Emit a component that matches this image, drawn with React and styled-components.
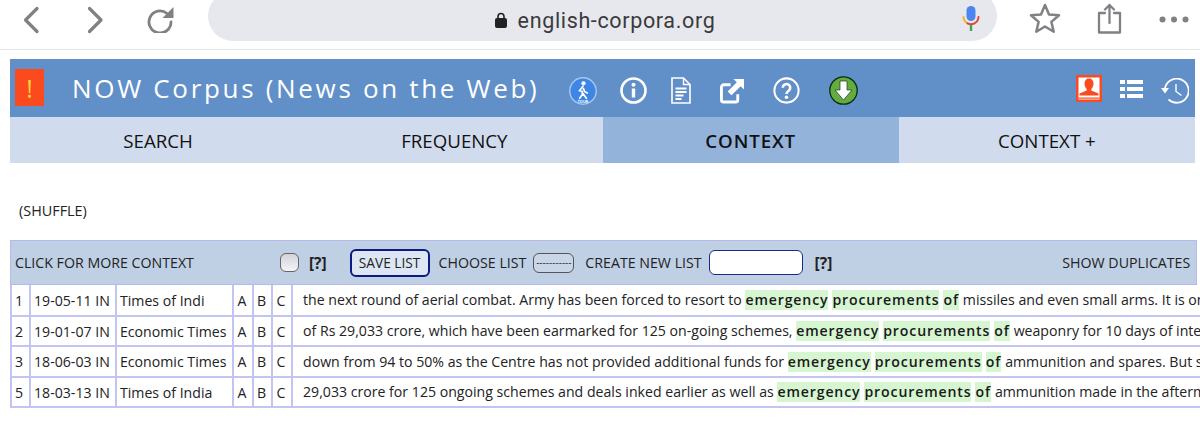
import React from "react";
import styled, { createGlobalStyle } from "styled-components";

const GlobalStyle = createGlobalStyle`
    html, body {
        margin: 0;
        height: 446px;
        overflow: hidden;
        background: #fff;
        font-family: "Open Sans", "Noto Sans", sans-serif;
        color: #1c1c1c;
    }
`

const BrowserBar = styled.div`
    height: 49px;
    border-bottom: 1px solid #e6e6e6;
    display: flex;
    align-items: center;
    overflow: hidden;
`
const NavIcons = styled.div`
    width: 208px;
    padding-left: 23px;
    box-sizing: border-box;
    display: flex;
    align-items: center;
    gap: 40px;
    margin-top: -10px;
    flex: none;
`
const UrlPill = styled.div`
    width: 789px;
    height: 50px;
    margin-top: -17px;
    flex: none;
    border-radius: 25px;
    background: #e7e8ed;
    display: flex;
    align-items: center;
    justify-content: center;
    padding: 8px 0 0 5px;
    box-sizing: border-box;
    position: relative;
    font-family: "Roboto", sans-serif;
    font-size: 21.5px;
    letter-spacing: 0.65px;
    color: #3a3a3c;
    gap: 11px;
`
const MicSlot = styled.span`
    position: absolute;
    right: 17px;
    top: 15px;
    line-height: 0;
`
const BrowserActions = styled.div`
    flex: 1;
    display: flex;
    align-items: center;
    margin-top: -13px;
    padding-left: 32px;
    gap: 36px;
`
const DotsSlot = styled.span`
    margin: 3px 0 0 1px;
    line-height: 0;
`

const Page = styled.div`
    padding: 9px 0 0 10px;
`
const Header = styled.div`
    width: 1185px;
    height: 58px;
    background: #618fc8;
    display: flex;
    align-items: center;
    box-sizing: border-box;
    padding-left: 5px;
`
const AlertBox = styled.div`
    width: 29px;
    height: 37px;
    margin-top: -1px;
    background: #fc4a1f;
    color: #f8d43c;
    font-size: 25px;
    display: flex;
    align-items: center;
    justify-content: center;
    flex: none;
`
const Title = styled.div`
    margin-left: 28px;
    width: 498px;
    flex: none;
    font-size: 26px;
    letter-spacing: 2.68px;
    color: #fff;
    white-space: nowrap;
`
const IconSlot = styled.span`
    margin-left: ${props => props.left}px;
    margin-top: ${props => props.top ?? 5}px;
    line-height: 0;
    flex: none;
`
const Tabs = styled.div`
    width: 1185px;
    display: grid;
    grid-template-columns: repeat(4, 1fr);
`
const Tab = styled.div`
    height: 46px;
    padding-top: 1px;
    box-sizing: border-box;
    display: flex;
    align-items: center;
    justify-content: center;
    font-size: 18.7px;
    font-weight: ${props => props.active ? 600 : 400};
    letter-spacing: ${props => props.active ? "0.9px" : "0"};
    background: ${props => props.active ? "#94b3da" : "#d0dcee"};
    color: #111;
`
const Shuffle = styled.div`
    margin: 38px 0 0 9px;
    height: 39px;
    font-size: 14.4px;
    line-height: 20px;
    color: #222;
`
const ControlBar = styled.div`
    width: 1187px;
    height: 45px;
    box-sizing: border-box;
    background: #bfd0e5;
    border: 1px solid #b6b9ec;
    display: flex;
    align-items: center;
    font-size: 14.2px;
    color: #222;
    white-space: nowrap;
`
const ControlLabel = styled.span`
    margin-left: ${props => props.left}px;
    ${props => props.bold && "font-weight: 700; font-size: 15.5px;"}
`
const RoundCheck = styled.input.attrs({ type: "checkbox" })`
    appearance: none;
    width: 19px;
    height: 19px;
    margin: 0 0 0 86px;
    border: 1px solid #666;
    border-radius: 6px;
    background: linear-gradient(#d2d2d8, #f5f5f7);
`
const SaveButton = styled.button`
    margin-left: 23px;
    width: 80px;
    height: 28px;
    padding: 0;
    box-sizing: border-box;
    border: 2px solid #0b1a85;
    border-radius: 6px;
    background: #dde6f3;
    font-family: inherit;
    font-size: 13.7px;
    color: #222;
`
const ListSelect = styled.div`
    margin-left: 7px;
    width: 41px;
    height: 20px;
    box-sizing: border-box;
    border: 1px solid #555;
    border-radius: 6px;
    font-size: 10px;
    line-height: 16px;
    text-align: center;
    color: #333;
    background: #c9d6e8;
`
const ListInput = styled.input`
    margin-left: 7px;
    width: 94px;
    height: 25px;
    padding: 0;
    box-sizing: border-box;
    border: 1px solid #1b2a8a;
    border-radius: 6px;
    background: #fff;
`
const Results = styled.table`
    width: 1240px;
    table-layout: fixed;
    border-collapse: collapse;
    font-size: 14.13px;
    color: #222;
`
const Cell = styled.td`
    height: 30.5px;
    padding: 1px ${props => props.center ? 2 : 0}px 0 ${props => props.pad ?? 3}px;
    box-sizing: border-box;
    border: 2px solid #c2c5f1;
    border-top-width: ${props => props.first ? 0 : 2}px;
    white-space: nowrap;
    overflow: hidden;
    text-align: ${props => props.center ? "center" : "left"};
`
const Hit = styled.span`
    display: inline-block;
    background: #d6f6d2;
    font-weight: 600;
    letter-spacing: 0.85px;
    line-height: 20px;
    margin-right: 4px;
    color: #1a1a1a;
`

const grey = "#808184";

function BackIcon() {
    return <svg width="24" height="28" viewBox="0 0 24 28" fill="none" stroke={grey} strokeWidth="3.2" strokeLinecap="round" strokeLinejoin="round"><path d="M14 2.500 2.500 14 14 25.500" /></svg>;
}
function ForwardIcon() {
    return <svg width="20" height="28" viewBox="0 0 20 28" fill="none" stroke={grey} strokeWidth="3.2" strokeLinecap="round" strokeLinejoin="round"><path d="M2.500 2.500 14 14 2.500 25.500" /></svg>;
}
function ReloadIcon() {
    return (
        <svg width="27" height="26" viewBox="0 0 27 26">
            <path d="M20 6.500A11 11 0 1 0 24 15" fill="none" stroke={grey} strokeWidth="2.800" strokeLinecap="round" />
            <path d="M26.500 0v11H15.500z" fill={grey} />
        </svg>
    );
}
function LockIcon() {
    return (
        <svg width="12" height="16" viewBox="0 0 12 16">
            <path d="M3 7V4.500a3 3 0 0 1 6 0V7" fill="none" stroke="#222" strokeWidth="1.600" />
            <rect y="6" width="12" height="10" rx="2" fill="#222" />
        </svg>
    );
}
function MicIcon() {
    return (
        <svg width="18" height="25" viewBox="0 0 18 25" fill="none">
            <rect x="4.500" y="0" width="9" height="15" rx="4.500" fill="#4a86ee" />
            <path d="M1.500 11a7.500 7.500 0 0 0 4 6.300" stroke="#f0b429" strokeWidth="2" strokeLinecap="round" />
            <path d="M5.500 17.300a7.500 7.500 0 0 0 7 0A7.500 7.500 0 0 0 16.500 11" stroke="#e2492f" strokeWidth="2" strokeLinecap="round" />
            <path d="M9 19v6" stroke="#3aa757" strokeWidth="2.400" />
        </svg>
    );
}
function StarIcon() {
    return <svg width="32" height="31" viewBox="0 0 32 31" fill="none" stroke={grey} strokeWidth="2.500" strokeLinejoin="round"><path d="M16 2l4 9.400 10 .9-7.600 6.600 2.300 9.800L16 23.500 7.300 28.700l2.300-9.800L2 12.300l10-.9z" /></svg>;
}
function ShareIcon() {
    return (
        <svg width="25" height="31" viewBox="0 0 25 31" fill="none" stroke={grey} strokeWidth="2.300" strokeLinecap="round" strokeLinejoin="round">
            <path d="M8 10H2v19.500h21V10h-6" />
            <path d="M12.500 20V2M8 6.500 12.500 2 17 6.500" />
        </svg>
    );
}
function DotsIcon() {
    return <svg width="30" height="7" viewBox="0 0 30 7" fill={grey}><circle cx="3.500" cy="3.500" r="3" /><circle cx="15" cy="3.500" r="3" /><circle cx="26.500" cy="3.500" r="3" /></svg>;
}

function TourIcon() {
    return (
        <svg width="28" height="28" viewBox="0 0 29 29">
            <circle cx="14.500" cy="14.500" r="13.700" fill="#3d86e6" stroke="#a9c6ea" strokeWidth="1.500" />
            <circle cx="15" cy="6.500" r="2.200" fill="#fff" />
            <path d="M14.500 9.500 11 14l2.500 1 .5 3-3 4M15 12l1 3 3 1.500M14.500 17l3.500 5" fill="none" stroke="#fff" strokeWidth="1.800" strokeLinecap="round" />
            <text x="14.500" y="26.500" fontSize="4" fontWeight="700" fill="#fff" textAnchor="middle">TOUR</text>
        </svg>
    );
}
function InfoIcon() {
    return (
        <svg width="27" height="27" viewBox="0 0 27 27" fill="none">
            <circle cx="13.500" cy="13.500" r="12" stroke="#fff" strokeWidth="2.600" />
            <circle cx="13.500" cy="7.800" r="2" fill="#fff" />
            <path d="M13.500 11.500v9" stroke="#fff" strokeWidth="3.400" />
        </svg>
    );
}
function DocIcon() {
    return (
        <svg width="20" height="27" viewBox="0 0 20 27" fill="none" stroke="#fff">
            <path d="M1 1h11.500l6.500 6.500V26H1z" strokeWidth="1.600" />
            <path d="M12.500 1v6.500H19" strokeWidth="1.400" />
            <path d="M4.500 11.500h11M4.500 15h11M4.500 18.500h8M4.500 22h6" strokeWidth="2" />
        </svg>
    );
}
function ExternalIcon() {
    return (
        <svg width="24" height="26" viewBox="0 0 25 27" fill="none">
            <path d="M11 7H4a2.500 2.500 0 0 0-2.500 2.500v13A2.500 2.500 0 0 0 4 25h12a2.500 2.500 0 0 0 2.500-2.500V17" stroke="#fff" strokeWidth="3" />
            <path d="M14 1h11v11l-3.500-3.500L12 18l-4-4 9.500-9.500z" fill="#fff" />
        </svg>
    );
}
function HelpIcon() {
    return (
        <svg width="27" height="27" viewBox="0 0 29 29" fill="none">
            <circle cx="14.500" cy="14.500" r="13" stroke="#fff" strokeWidth="2.200" />
            <path d="M10.500 11.500a4 4 0 1 1 6.300 3.300c-1.500 1-2.300 1.700-2.300 3.400" stroke="#fff" strokeWidth="2.800" />
            <circle cx="14.500" cy="21.700" r="1.900" fill="#fff" />
        </svg>
    );
}
function DownloadIcon() {
    return (
        <svg width="29" height="29" viewBox="0 0 29 29">
            <circle cx="14.500" cy="14.500" r="13.700" fill="#62ad3f" stroke="#0d2a14" strokeWidth="1.300" />
            <path d="M11 5h7v9h5l-8.500 10L6 14h5z" fill="#fff" stroke="#1d3a1a" strokeWidth=".7" />
        </svg>
    );
}
function ProfileIcon() {
    return (
        <svg width="26" height="27" viewBox="0 0 26 27">
            <rect width="26" height="27" fill="#fc4a1f" />
            <rect x="2.500" y="2.500" width="21" height="22" fill="#fff" />
            <path d="M13 3.500c3 0 4.500 2 4.500 5 0 2.500-1 4.500-2.200 5.500v1.500l7.200 3v2h-19v-2l7.200-3V14C9.500 13 8.500 11 8.500 8.500c0-3 1.500-5 4.500-5z" fill="#fc4a1f" />
            <rect x="2.500" y="22.500" width="21" height="1.200" fill="#fc4a1f" />
        </svg>
    );
}
function ListIcon() {
    return (
        <svg width="23" height="18" viewBox="0 0 23 18" fill="#fff">
            <rect width="5" height="4" /><rect x="7" width="16" height="4" />
            <rect y="7" width="5" height="4" /><rect x="7" y="7" width="16" height="4" />
            <rect y="14" width="5" height="4" /><rect x="7" y="14" width="16" height="4" />
        </svg>
    );
}
function HistoryIcon() {
    return (
        <svg width="28" height="26" viewBox="0 0 28 26" fill="none" stroke="#fff">
            <path d="M4 10A12 12 0 1 1 7.500 21.500" strokeWidth="1.800" />
            <path d="M0 10h8l-4 5.500z" fill="#fff" stroke="none" />
            <path d="M15 6v7.500l5.500 4" strokeWidth="1.400" />
        </svg>
    );
}

const rows = [
    { n: 1, date: "19-05-11 IN", source: "Times of Indi", before: "the next round of aerial combat. Army has been forced to resort to", after: "missiles and even small arms. It is only after the" },
    { n: 2, date: "19-01-07 IN", source: "Economic Times", before: "of Rs 29,033 crore, which have been earmarked for 125 on-going schemes,", after: "weaponry for 10 days of intense war" },
    { n: 3, date: "18-06-03 IN", source: "Economic Times", before: "down from 94 to 50% as the Centre has not provided additional funds for", after: "ammunition and spares. But sources said" },
    { n: 5, date: "18-03-13 IN", source: "Times of India", before: "29,033 crore for 125 ongoing schemes and deals inked earlier as well as", after: "ammunition made in the aftermath of" },
];

function ResultRow(props) {
    const row = props.row;
    return (
        <tr>
            <Cell first={props.first}>{row.n}</Cell>
            <Cell first={props.first}>{row.date}</Cell>
            <Cell first={props.first}>{row.source}</Cell>
            <Cell first={props.first} center pad={0}>A</Cell>
            <Cell first={props.first} center pad={0}>B</Cell>
            <Cell first={props.first} center pad={0}>C</Cell>
            <Cell first={props.first} pad={10}>
                {row.before} <Hit>emergency</Hit><Hit>procurements</Hit><Hit>of</Hit>{row.after}
            </Cell>
        </tr>
    );
}

function App() {
    return (
        <>
            <GlobalStyle />
            <BrowserBar>
                <NavIcons>
                    <BackIcon />
                    <ForwardIcon />
                    <ReloadIcon />
                </NavIcons>
                <UrlPill>
                    <LockIcon />
                    english-corpora.org
                    <MicSlot><MicIcon /></MicSlot>
                </UrlPill>
                <BrowserActions>
                    <StarIcon />
                    <ShareIcon />
                    <DotsSlot><DotsIcon /></DotsSlot>
                </BrowserActions>
            </BrowserBar>
            <Page>
                <Header>
                    <AlertBox>!</AlertBox>
                    <Title>NOW Corpus (News on the Web)</Title>
                    <IconSlot left={-1}><TourIcon /></IconSlot>
                    <IconSlot left={23}><InfoIcon /></IconSlot>
                    <IconSlot left={24}><DocIcon /></IconSlot>
                    <IconSlot left={29}><ExternalIcon /></IconSlot>
                    <IconSlot left={29}><HelpIcon /></IconSlot>
                    <IconSlot left={29}><DownloadIcon /></IconSlot>
                    <IconSlot left={218} top={1}><ProfileIcon /></IconSlot>
                    <IconSlot left={18} top={2}><ListIcon /></IconSlot>
                    <IconSlot left={18} top={5}><HistoryIcon /></IconSlot>
                </Header>
                <Tabs>
                    <Tab>SEARCH</Tab>
                    <Tab>FREQUENCY</Tab>
                    <Tab active>CONTEXT</Tab>
                    <Tab>CONTEXT +</Tab>
                </Tabs>
                <Shuffle>(SHUFFLE)</Shuffle>
                <ControlBar>
                    <ControlLabel left={4}>CLICK FOR MORE CONTEXT</ControlLabel>
                    <RoundCheck />
                    <ControlLabel left={10} bold>[?]</ControlLabel>
                    <SaveButton>SAVE LIST</SaveButton>
                    <ControlLabel left={9}>CHOOSE LIST</ControlLabel>
                    <ListSelect>-----------</ListSelect>
                    <ControlLabel left={11}>CREATE NEW LIST</ControlLabel>
                    <ListInput />
                    <ControlLabel left={12} bold>[?]</ControlLabel>
                    <ControlLabel left={230}>SHOW DUPLICATES</ControlLabel>
                </ControlBar>
                <Results>
                    <colgroup>
                        <col width="19" />
                        <col width="86" />
                        <col width="117" />
                        <col width="20" />
                        <col width="19" />
                        <col width="20" />
                        <col />
                    </colgroup>
                    <tbody>
                        {rows.map((row, i) => <ResultRow key={row.n} row={row} first={i === 0} />)}
                    </tbody>
                </Results>
            </Page>
        </>
    );
}

export default App;
